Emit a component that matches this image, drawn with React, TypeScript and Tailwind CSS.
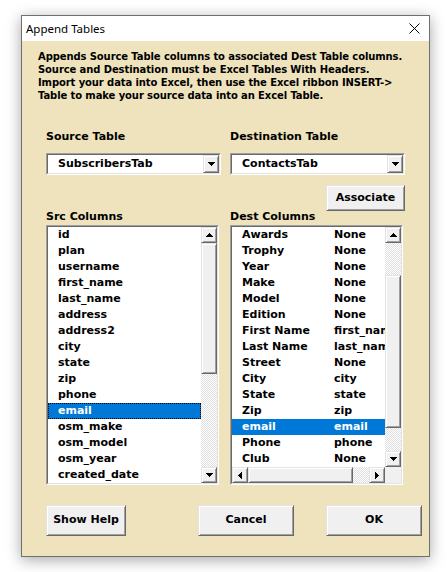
import React from "react";

const srcItems = [
  "id", "plan", "username", "first_name", "last_name", "address", "address2", "city",
  "state", "zip", "phone", "email", "osm_make", "osm_model", "osm_year", "created_date",
];

const destItems: [string, string][] = [
  ["Awards", "None"], ["Trophy", "None"], ["Year", "None"], ["Make", "None"],
  ["Model", "None"], ["Edition", "None"], ["First Name", "first_name"], ["Last Name", "last_name"],
  ["Street", "None"], ["City", "city"], ["State", "state"], ["Zip", "zip"],
  ["email", "email"], ["Phone", "phone"], ["Club", "None"],
];

type Dir = "up" | "down" | "left" | "right";

function Tri({ dir }: { dir: Dir }) {
  if (dir === "up" || dir === "down") {
    const rows = dir === "down" ? [0, 1, 2, 3] : [3, 2, 1, 0];
    return (
      <svg width="7" height="4" viewBox="0 0 7 4" shapeRendering="crispEdges">
        {rows.map((r, i) => (
          <rect key={i} x={r} y={i} width={7 - 2 * r} height={1} fill="#000" />
        ))}
      </svg>
    );
  }
  const cols = dir === "right" ? [0, 1, 2, 3] : [3, 2, 1, 0];
  return (
    <svg width="4" height="7" viewBox="0 0 4 7" shapeRendering="crispEdges">
      {cols.map((c, i) => (
        <rect key={i} x={i} y={c} width={1} height={7 - 2 * c} fill="#000" />
      ))}
    </svg>
  );
}

const raised =
  "bg-[#f0f0f0] border border-t-[#e3e3e3] border-l-[#e3e3e3] border-r-[#696969] border-b-[#696969] shadow-[inset_1px_1px_0_#ffffff,inset_-1px_-1px_0_#a0a0a0]";

const dither =
  "bg-[image:repeating-conic-gradient(#dedede_0_25%,#ffffff_0_50%)] bg-[length:2px_2px]";

function ScrollBtn({ dir, className = "" }: { dir: Dir; className?: string }) {
  return (
    <div className={`${raised} w-[16px] h-[16px] flex items-center justify-center shrink-0 ${className}`}>
      <Tri dir={dir} />
    </div>
  );
}

function Sunken({ className = "", children }: { className?: string; children: React.ReactNode }) {
  return (
    <div className={`border border-t-[#a0a0a0] border-l-[#a0a0a0] border-r-white border-b-white ${className}`}>
      <div className="border border-t-[#696969] border-l-[#696969] border-r-[#e3e3e3] border-b-[#e3e3e3] h-full w-full bg-white flex overflow-hidden">
        {children}
      </div>
    </div>
  );
}

function Combo({ value }: { value: string }) {
  return (
    <Sunken className="h-[22px] w-[175px] mt-[9px]">
      <div className="flex-1 pl-[10px] flex items-center text-[11px] font-bold text-black">{value}</div>
      <div className={`${raised} w-[16px] h-full flex items-center justify-center`}>
        <Tri dir="down" />
      </div>
    </Sunken>
  );
}

function Button({ label, className = "" }: { label: string; className?: string }) {
  return (
    <div className={`${raised} flex items-center justify-center text-[11px] font-bold text-black ${className}`}>
      {label}
    </div>
  );
}

export default function App() {
  return (
    <div className="min-h-[572px] bg-white pt-[15px] pl-[21px] font-['DejaVu_Sans',sans-serif]">
      <div className="w-[409px] h-[542px] border border-[#6f6f6f] shadow-[0_3px_14px_rgba(0,0,0,0.35)] flex flex-col bg-[#eee3bd]">
        {/* title bar */}
        <div className="h-[25px] bg-white flex items-center justify-between pl-[4px] pr-[9px] shrink-0">
          <span className="font-['Noto_Sans',sans-serif] text-[11.5px] text-black">Append Tables</span>
          <svg width="11" height="11" viewBox="0 0 11 11">
            <path d="M0.5 0.5 L10.5 10.5 M10.5 0.5 L0.5 10.5" stroke="#000" strokeWidth="1" />
          </svg>
        </div>

        {/* body */}
        <div className="flex-1 flex flex-col">
          <p className="ml-[16px] mt-[9px] text-[10px] leading-[13px] font-bold text-black tracking-[-0.1px]">
            Appends Source Table columns to associated Dest Table columns.
            <br />
            Source and Destination must be Excel Tables With Headers.
            <br />
            Import your data into Excel, then use the Excel ribbon INSERT-&gt;
            <br />
            Table to make your source data into an Excel Table.
          </p>

          <div className="ml-[24px] mt-[28px] grid grid-cols-[175px_175px] gap-x-[9px]">
            <div className="text-[11px] leading-[14px] font-bold text-black">Source Table</div>
            <div className="text-[11px] leading-[14px] font-bold text-black">Destination Table</div>

            <Combo value="SubscribersTab" />
            <Combo value="ContactsTab" />

            <div />
            <Button label="Associate" className="mt-[10px] h-[26px] w-[79px] justify-self-end" />

            <div className="text-[11px] leading-[12px] font-bold text-black">Src Columns</div>
            <div className="text-[11px] leading-[12px] font-bold text-black">Dest Columns</div>

            {/* Src list */}
            <Sunken className="mt-[2px] w-[173px] h-[260px]">
              <div className="flex-1 min-w-0 overflow-hidden">
                {srcItems.map((it) =>
                  it === "email" ? (
                    <div
                      key={it}
                      className="h-[16px] bg-[#0078d7] text-white border border-dotted border-black pl-[9px] flex items-center text-[11px] font-bold whitespace-nowrap"
                    >
                      {it}
                    </div>
                  ) : (
                    <div key={it} className="h-[16px] pl-[10px] flex items-center text-[11px] font-bold text-black whitespace-nowrap">
                      {it}
                    </div>
                  )
                )}
              </div>
              <div className="w-[16px] flex flex-col shrink-0">
                <ScrollBtn dir="up" />
                <div className={`${raised} h-[131px] w-[16px] shrink-0`} />
                <div className={`flex-1 ${dither}`} />
                <ScrollBtn dir="down" />
              </div>
            </Sunken>

            {/* Dest list */}
            <Sunken className="mt-[2px] w-[173px] h-[260px]">
              <div className="flex-1 min-w-0 flex flex-col">
                <div className="flex flex-1 min-h-0">
                  <div className="flex-1 min-w-0 overflow-hidden">
                    {destItems.map(([a, b]) => (
                      <div
                        key={a}
                        className={`h-[16px] pl-[10px] flex items-center text-[11px] font-bold whitespace-nowrap ${
                          a === "email" ? "bg-[#0078d7] text-white" : "text-black"
                        }`}
                      >
                        <span className="w-[92px] shrink-0">{a}</span>
                        <span>{b}</span>
                      </div>
                    ))}
                  </div>
                  <div className="w-[16px] flex flex-col shrink-0">
                    <ScrollBtn dir="up" />
                    <div className={`h-[32px] shrink-0 ${dither}`} />
                    <div className={`${raised} h-[153px] w-[16px] shrink-0`} />
                    <div className={`flex-1 ${dither}`} />
                    <ScrollBtn dir="down" />
                  </div>
                </div>
                <div className="h-[16px] flex shrink-0">
                  <ScrollBtn dir="left" />
                  <div className={`${raised} w-[105px] h-[16px] shrink-0`} />
                  <div className={`flex-1 ${dither}`} />
                  <ScrollBtn dir="right" />
                  <div className="w-[16px] h-[16px] bg-[#f0f0f0] shrink-0" />
                </div>
              </div>
            </Sunken>
          </div>

          <div className="ml-[24px] mt-[20px] flex">
            <Button label="Show Help" className="w-[80px] h-[31px]" />
            <Button label="Cancel" className="ml-[72px] w-[96px] h-[31px]" />
            <Button label="OK" className="ml-[32px] w-[96px] h-[31px]" />
          </div>
        </div>
      </div>
    </div>
  );
}
